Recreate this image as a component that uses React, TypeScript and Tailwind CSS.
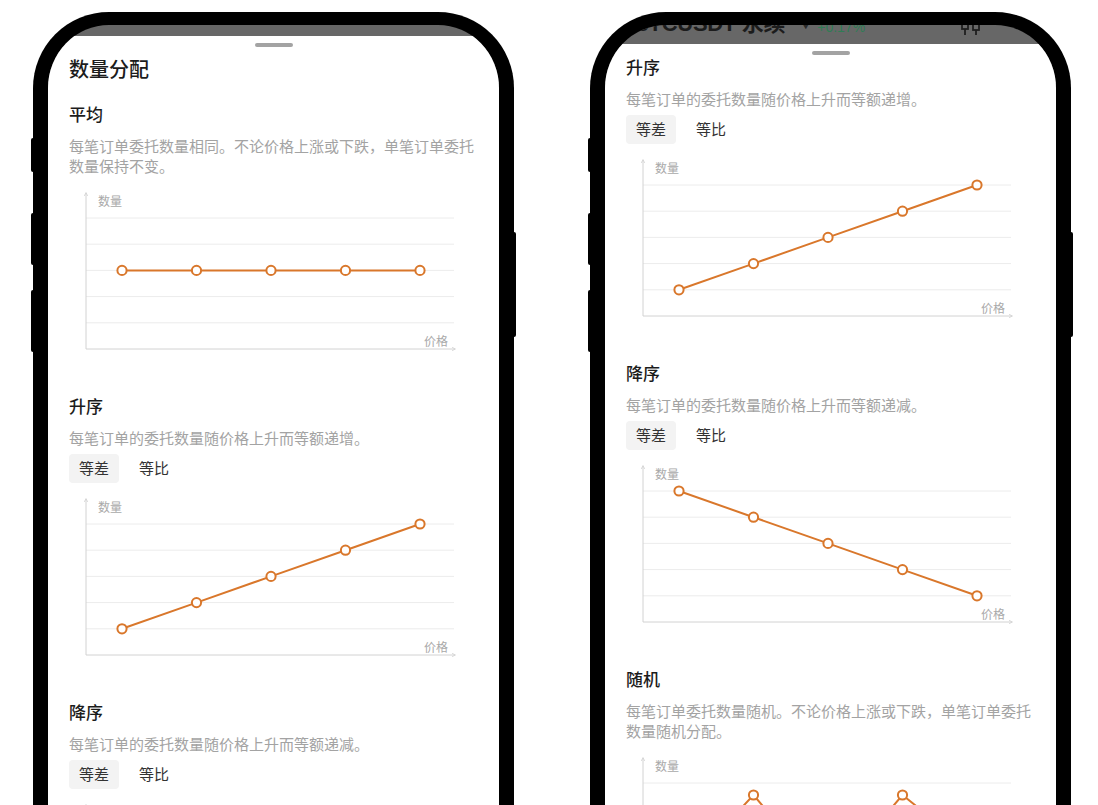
import React from 'react';

const ORANGE = '#d9772b';
const XS = [53, 127.5, 202, 276.5, 351];
const GRID = [28, 54.2, 80.4, 106.6, 132.8];

function Chart({ ys, className }: { ys: number[]; className: string }) {
  const pts = ys.map((y, i) => `${XS[i]},${y}`).join(' ');
  return (
    <svg width="392" height="162" viewBox="0 0 392 162" className={`block ${className}`}>
      {GRID.map((g) => (
        <line key={g} x1={17} x2={385} y1={g} y2={g} stroke="#ececec" strokeWidth={1} />
      ))}
      <line x1={17} y1={3} x2={17} y2={159} stroke="#d2d2d2" strokeWidth={1} />
      <path d="M15.3 6 L17 2.5 L18.7 6" fill="none" stroke="#d2d2d2" strokeWidth={0.8} />
      <line x1={17} y1={159} x2={386} y2={159} stroke="#d2d2d2" strokeWidth={1} />
      <path d="M383 157.3 L386.5 159 L383 160.7" fill="none" stroke="#d2d2d2" strokeWidth={0.8} />
      <text x={29} y={16} fontSize={12} fill="#a9a9a9" fontFamily="'Noto Sans CJK SC', sans-serif">
        数量
      </text>
      <text x={379} y={156} fontSize={12} fill="#a9a9a9" textAnchor="end" fontFamily="'Noto Sans CJK SC', sans-serif">
        价格
      </text>
      <polyline points={pts} fill="none" stroke={ORANGE} strokeWidth={2} strokeLinejoin="round" />
      {ys.map((y, i) => (
        <circle key={i} cx={XS[i]} cy={y} r={4.6} fill="#fff" stroke={ORANGE} strokeWidth={2} />
      ))}
    </svg>
  );
}

function Tabs() {
  return (
    <div className="mt-[6px] flex gap-[10px]">
      <div className="h-[29px] px-[10px] flex items-center rounded-[4px] bg-[#f3f3f3] text-[15px] text-[#333]">等差</div>
      <div className="h-[29px] px-[10px] flex items-center text-[15px] text-[#333]">等比</div>
    </div>
  );
}

function Section({ title, desc, tabs, ys }: { title: string; desc: string; tabs?: boolean; ys: number[] }) {
  return (
    <div>
      <div className="text-[17px] leading-[24px] font-medium text-[#1c1c1c]">{title}</div>
      <p className="mt-[10px] text-[15px] leading-[20px] text-[#a3a3a3]">{desc}</p>
      {tabs && <Tabs />}
      <Chart ys={ys} className={tabs ? 'mt-[13px]' : 'mt-[14px]'} />
    </div>
  );
}

function Content() {
  const mid = GRID[2];
  return (
    <div className="flex flex-col gap-[42px]">
      <Section
        title="平均"
        desc="每笔订单委托数量相同。不论价格上涨或下跌，单笔订单委托数量保持不变。"
        ys={[mid, mid, mid, mid, mid]}
      />
      <Section
        title="升序"
        desc="每笔订单的委托数量随价格上升而等额递增。"
        tabs
        ys={[GRID[4], GRID[3], GRID[2], GRID[1], GRID[0]]}
      />
      <Section
        title="降序"
        desc="每笔订单的委托数量随价格上升而等额递减。"
        tabs
        ys={[GRID[0], GRID[1], GRID[2], GRID[3], GRID[4]]}
      />
      <Section
        title="随机"
        desc="每笔订单委托数量随机。不论价格上涨或下跌，单笔订单委托数量随机分配。"
        ys={[120, 40, 128, 40, 100]}
      />
    </div>
  );
}

function SideButtons() {
  return (
    <>
      <div className="absolute -left-[2px] top-[126px] w-[4px] h-[34px] bg-black rounded-l-[2px]" />
      <div className="absolute -left-[2px] top-[201px] w-[4px] h-[52px] bg-black rounded-l-[2px]" />
      <div className="absolute -left-[2px] top-[278px] w-[4px] h-[62px] bg-black rounded-l-[2px]" />
      <div className="absolute -right-[2px] top-[220px] w-[4px] h-[105px] bg-black rounded-r-[2px]" />
    </>
  );
}

function CandleIcon() {
  return (
    <svg width="22" height="16" viewBox="0 0 22 16" fill="none" stroke="#1f1f1f" strokeWidth={1.8}>
      <line x1="5" y1="0" x2="5" y2="16" />
      <rect x="2" y="3" width="6" height="7" fill="#676767" />
      <line x1="16" y1="0" x2="16" y2="16" />
      <rect x="13" y="5" width="6" height="6" fill="#676767" />
    </svg>
  );
}

function Phone({ second }: { second?: boolean }) {
  return (
    <div className="relative w-[481px] h-[840px] shrink-0">
      <SideButtons />
      <div className="relative h-full rounded-t-[76px] border-x-[15px] border-t-[13px] border-black bg-[#676767] overflow-hidden flex flex-col">
        {second ? (
          <div className="h-[19px] shrink-0 overflow-hidden">
            <div className="-mt-[16px] h-[34px] flex items-start pl-[28px] pr-[74px]">
              <span className="leading-[30px] text-[22px] font-bold text-[#1c1c1c] font-['Liberation_Sans','Noto_Sans_CJK_SC',sans-serif] tracking-[-0.3px]">
                BTCUSDT 永续
              </span>
              <span className="ml-[16px] mt-[7px] leading-[20px] text-[9px] text-[#2a2a2a]">▼</span>
              <span className="ml-[7px] mt-[8px] leading-[20px] text-[14px] text-[#2f7d55] font-['Liberation_Sans',sans-serif]">
                +0.17%
              </span>
              <div className="flex-1" />
              <div className="mt-[10px]">
                <CandleIcon />
              </div>
            </div>
          </div>
        ) : (
          <div className="h-[11px] shrink-0" />
        )}
        <div className="flex-1 min-h-0 bg-white rounded-t-[14px] flex flex-col">
          <div className="h-[11px] pt-[7px] shrink-0 flex justify-center">
            <div className="w-[38px] h-[4px] rounded-full bg-[#a3a3a3]" />
          </div>
          <div className="flex-1 min-h-0 overflow-hidden">
            <div className={`px-[21px] ${second ? '-mt-[339px]' : 'pt-[8px]'}`}>
              <div className="text-[20px] leading-[28px] font-medium text-[#1c1c1c] mb-[19px]">数量分配</div>
              <Content />
            </div>
          </div>
        </div>
      </div>
    </div>
  );
}

export default function App() {
  return (
    <div className="w-[1098px] h-[805px] overflow-hidden bg-white flex gap-[76px] pl-[33px] pt-[12px] font-['Noto_Sans_CJK_SC','Noto_Sans',sans-serif]">
      <Phone />
      <Phone second />
    </div>
  );
}
